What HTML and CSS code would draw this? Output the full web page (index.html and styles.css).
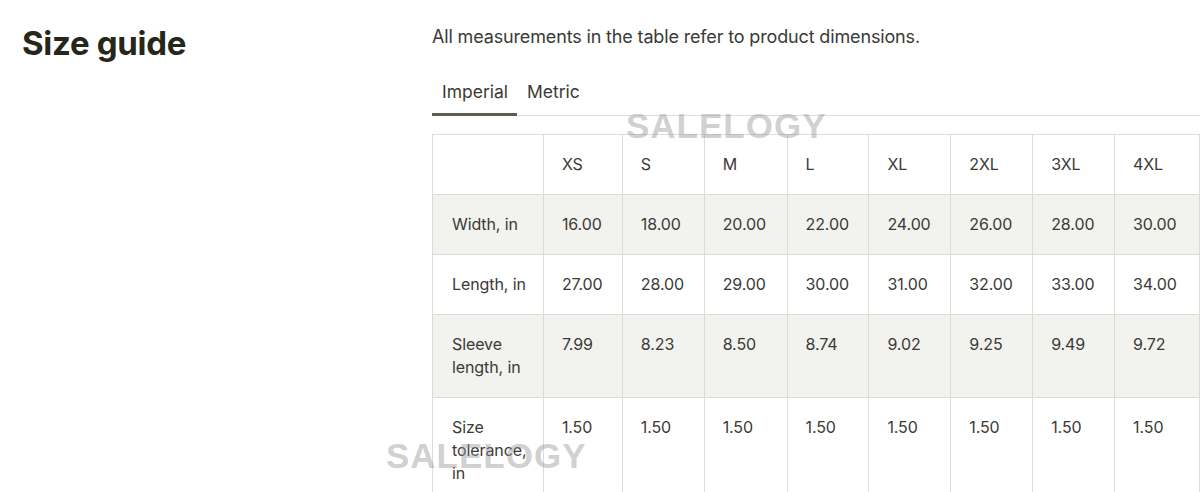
FILE: index.html
```html
<!DOCTYPE html>
<html lang="en">
<head>
<meta charset="utf-8">
<title>Size guide</title>
<link rel="stylesheet" href="styles.css">
</head>
<body>
<div class="page">
  <h1 class="title">Size guide</h1>
  <section class="content">
    <p class="intro">All measurements in the table refer to product dimensions.</p>
    <div class="tabs">
      <span class="tab active">Imperial</span>
      <span class="tab">Metric</span>
    </div>
    <table class="sizes">
      <colgroup>
        <col class="c-label"><col class="c-xs"><col class="c-s"><col class="c-m"><col class="c-l"><col class="c-xl"><col class="c-2xl"><col class="c-3xl"><col class="c-4xl">
      </colgroup>
      <tr class="head">
        <td></td><td>XS</td><td>S</td><td>M</td><td>L</td><td>XL</td><td>2XL</td><td>3XL</td><td>4XL</td>
      </tr>
      <tr class="shade">
        <td>Width, in</td><td>16.00</td><td>18.00</td><td>20.00</td><td>22.00</td><td>24.00</td><td>26.00</td><td>28.00</td><td>30.00</td>
      </tr>
      <tr>
        <td>Length, in</td><td>27.00</td><td>28.00</td><td>29.00</td><td>30.00</td><td>31.00</td><td>32.00</td><td>33.00</td><td>34.00</td>
      </tr>
      <tr class="shade">
        <td>Sleeve<br>length, in</td><td>7.99</td><td>8.23</td><td>8.50</td><td>8.74</td><td>9.02</td><td>9.25</td><td>9.49</td><td>9.72</td>
      </tr>
      <tr>
        <td>Size<br>tolerance,<br>in</td><td>1.50</td><td>1.50</td><td>1.50</td><td>1.50</td><td>1.50</td><td>1.50</td><td>1.50</td><td>1.50</td>
      </tr>
    </table>
  </section>
</div>
<div class="mark mark-top">SALELOGY</div>
<div class="mark mark-bottom">SALELOGY</div>
</body>
</html>
```

FILE: styles.css
```css
* { box-sizing: border-box; }
html, body { margin: 0; padding: 0; background: #fff; }
body {
  width: 1200px;
  height: 492px;
  overflow: hidden;
  position: relative;
  font-family: Inter, "Liberation Sans", sans-serif;
  color: #3a3a36;
}
.page {
  display: grid;
  grid-template-columns: 410px 1fr;
  padding-left: 22px;
}
.title {
  margin: 22px 0 0 0;
  font-size: 33px;
  line-height: 42px;
  font-weight: 700;
  letter-spacing: -0.3px;
  color: #26261a;
}
.content {
  padding-top: 26px;
}
.intro {
  margin: 0;
  font-size: 18px;
  line-height: 22px;
  color: #3a3a36;
  letter-spacing: -0.15px;
}
.tabs {
  display: flex;
  margin-top: 20px;
  border-bottom: 1px solid #dcdcd8;
  height: 48px;
}
.tab {
  font-size: 17.5px;
  line-height: 22px;
  padding: 13px 0 0 0;
  color: #3a3a36;
}
.tab.active {
  width: 85px;
  padding-left: 10px;
  border-bottom: 3px solid #5e5e50;
  margin-bottom: -1px;
}
.tab + .tab { padding-left: 10px; }
.sizes {
  margin-top: 18px;
  border-collapse: collapse;
  width: 768px;
  font-size: 16px;
  line-height: 23px;
  letter-spacing: -0.1px;
  color: #3a3a36;
}
.sizes td {
  border: 1px solid #dcdcd8;
  border-bottom: none;
  vertical-align: top;
  padding: 18px 6px 18px 18px;
}
.sizes tr.shade td { background: #f2f2ee; }
.sizes td:first-child { padding-left: 19px; }
.c-label { width: 111px; }
.c-xs { width: 79px; }
.c-s { width: 82px; }
.c-m { width: 83px; }
.c-l { width: 82px; }
.c-xl { width: 82px; }
.c-2xl { width: 82px; }
.c-3xl { width: 82px; }
.c-4xl { width: 85px; }
.mark {
  position: absolute;
  font-family: "Liberation Sans", Arial, sans-serif;
  font-weight: 700;
  font-size: 35px;
  letter-spacing: 1px;
  color: rgba(150, 150, 150, 0.45);
  pointer-events: none;
}
.mark-top { left: 626px; top: 106px; }
.mark-bottom { left: 386px; top: 436px; }
```
